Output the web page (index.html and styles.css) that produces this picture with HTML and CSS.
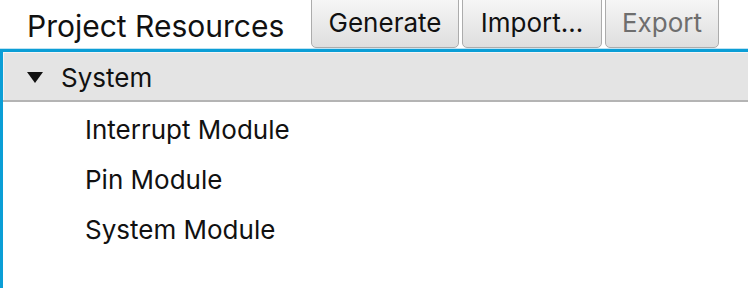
FILE: index.html
```html
<!DOCTYPE html>
<html>
<head>
<link rel="stylesheet" href="styles.css">
</head>
<body>
<div class="toolbar">
	<div class="title">Project Resources</div>
	<button class="btn btn-generate">Generate</button>
	<button class="btn btn-import">Import...</button>
	<button class="btn btn-export" disabled>Export</button>
</div>
<div class="tree">
	<div class="tree-head">
		<span class="arrow"></span>
		<span class="head-label">System</span>
	</div>
	<div class="tree-body">
		<div class="tree-item">Interrupt Module</div>
		<div class="tree-item">Pin Module</div>
		<div class="tree-item">System Module</div>
	</div>
</div>
</body>
</html>
```

FILE: styles.css
```css
body{
	margin: 0;
	font-family: "Inter", "Noto Sans", sans-serif;
	font-size: 26px;
	color: #111;
	background: #fff;
	overflow: hidden;
}
.toolbar{
	display: flex;
	align-items: flex-end;
	height: 48px;
}
.title{
	padding-left: 27px;
	width: 311px;
	box-sizing: border-box;
	align-self: center;
	margin-top: 4px;
	font-size: 30px;
}
.btn{
	font-family: inherit;
	font-size: 26px;
	height: 58px;
	padding: 6px 0 0 0;
	margin-right: 3px;
	border: 1px solid #acacac;
	border-radius: 5px;
	background: linear-gradient(#fafafa, #dedede);
	color: #111;
	flex-shrink: 0;
}
.btn-generate{
	width: 148px;
}
.btn-import{
	width: 140px;
}
.btn-export{
	width: 114px;
	color: #6e6e6e;
}
.tree{
	border-top: 3px solid #0b9ed6;
	border-left: 3px solid #0b9ed6;
	box-shadow: 0 -1px 0 #bfe3f3;
	margin-top: 1px;
	height: 236px;
}
.tree-head{
	display: flex;
	align-items: center;
	height: 50px;
	padding-top: 2px;
	box-sizing: border-box;
	background: #e4e4e4;
	border-bottom: 2px solid #b4b4b4;
	box-shadow: inset 1px 1px 0 #f4f4f4;
}
.arrow{
	width: 0;
	height: 0;
	margin-left: 24px;
	border-left: 8px solid transparent;
	border-right: 8px solid transparent;
	border-top: 11px solid #111;
}
.head-label{
	margin-left: 18px;
}
.tree-body{
	padding-top: 2px;
}
.tree-item{
	height: 50px;
	line-height: 52px;
	padding-left: 82px;
}
```
